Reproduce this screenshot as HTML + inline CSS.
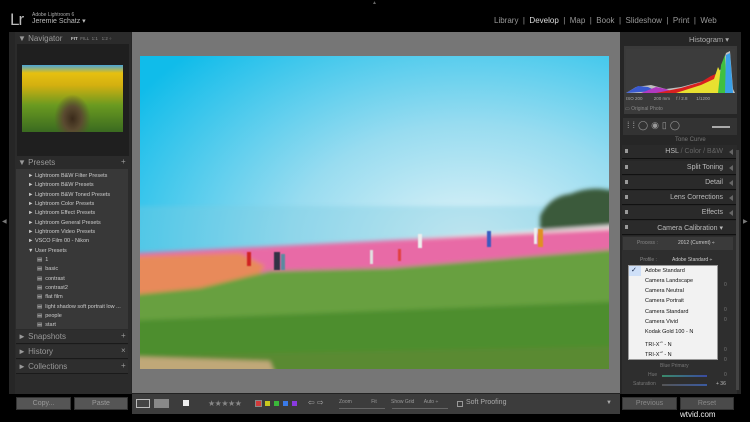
<!DOCTYPE html>
<html><head><meta charset="utf-8"><style>
*{margin:0;padding:0;box-sizing:border-box}
body{width:750px;height:422px;overflow:hidden;background:#000;font-family:"Liberation Sans",sans-serif;position:relative;color:#aaa}
.a{position:absolute}
.t{position:absolute;white-space:nowrap}
.ph{font-size:8px;color:#999}
.li{font-size:5.5px;color:#ccc}
.sec{position:absolute;left:622px;width:115px;height:14px;background:#2a2a2a;border-bottom:1px solid #111}
.sec span{position:absolute;right:14px;top:3px;font-size:7px;color:#bbb}
.sec i{position:absolute;right:4px;top:4px;width:0;height:0;border-top:3px solid transparent;border-bottom:3px solid transparent;border-right:4px solid #666}
.sec b{position:absolute;left:3px;top:4px;width:3px;height:4px;background:#999}
.dd{font-size:5.5px;color:#111;position:absolute;left:645px}
</style></head><body>
<!-- top bar -->
<div class="t" style="left:10px;top:10px;font-size:17px;color:#bbb;letter-spacing:-1px">Lr</div>
<div class="t" style="left:32px;top:12px;font-size:5px;color:#aaa">Adobe Lightroom 6</div>
<div class="t" style="left:32px;top:17px;font-size:7px;color:#bbb">Jeremie Schatz ▾</div>
<div class="t" style="left:494px;top:16px;font-size:8px;color:#999">Library &nbsp;|&nbsp; <span style="color:#ddd">Develop</span> &nbsp;|&nbsp; Map &nbsp;|&nbsp; Book &nbsp;|&nbsp; Slideshow &nbsp;|&nbsp; Print &nbsp;|&nbsp; Web</div>
<div class="t" style="left:372px;top:0;font-size:5px;color:#666">▲</div>

<!-- left panel -->
<div class="a" style="left:9px;top:32px;width:123px;height:362px;background:#262626"></div>
<div class="a" style="left:15px;top:32px;width:116px;height:362px;background:#2b2b2b"></div>
<div class="t ph" style="left:18px;top:34px">▼ Navigator</div>
<div class="t" style="left:71px;top:36px;font-size:4.5px;color:#888"><b style="color:#ccc">FIT</b> &nbsp;FILL &nbsp;1:1 &nbsp; 1:2 ÷</div>
<div class="a" style="left:17px;top:44px;width:112px;height:112px;background:#1f1f1f"></div>
<div class="a" style="left:22px;top:65px;width:101px;height:67px;background:radial-gradient(ellipse 30% 60% at 50% 80%,#3a2a1a 0,#5a4a30 30%,transparent 60%),linear-gradient(#4aa4d8 0,#e6c010 12%,#d4b010 30%,#6a9a20 60%,#3a6a20 100%)"></div>
<div class="t ph" style="left:18px;top:158px">▼ Presets</div>
<div class="t" style="left:121px;top:157px;font-size:8px;color:#999">+</div>
<div class="a" style="left:16px;top:169px;width:112px;height:160px;background:#383838"></div>
<div class="t li" style="left:28px;top:172px;line-height:9.35px">► Lightroom B&amp;W Filter Presets<br>► Lightroom B&amp;W Presets<br>► Lightroom B&amp;W Toned Presets<br>► Lightroom Color Presets<br>► Lightroom Effect Presets<br>► Lightroom General Presets<br>► Lightroom Video Presets<br>► VSCO Film 00 - Nikon<br>▼ User Presets</div>
<div class="t li" style="left:37px;top:256px;line-height:9.35px">▤ &nbsp;1<br>▤ &nbsp;basic<br>▤ &nbsp;contrast<br>▤ &nbsp;contrast2<br>▤ &nbsp;flat film<br>▤ &nbsp;light shadow soft portrait low ...<br>▤ &nbsp;people<br>▤ &nbsp;start</div>
<div class="a" style="left:16px;top:330px;width:112px;height:14px;background:#2e2e2e;border-bottom:1px solid #1a1a1a"></div>
<div class="t ph" style="left:18px;top:332px">► Snapshots</div><div class="t ph" style="left:121px;top:331px">+</div>
<div class="a" style="left:16px;top:345px;width:112px;height:14px;background:#2e2e2e;border-bottom:1px solid #1a1a1a"></div>
<div class="t ph" style="left:18px;top:347px">► History</div><div class="t ph" style="left:121px;top:346px">×</div>
<div class="a" style="left:16px;top:360px;width:112px;height:14px;background:#2e2e2e;border-bottom:1px solid #1a1a1a"></div>
<div class="t ph" style="left:18px;top:362px">► Collections</div><div class="t ph" style="left:121px;top:361px">+</div>
<div class="t" style="left:2px;top:218px;font-size:6px;color:#777">◀</div>
<div class="a" style="left:16px;top:397px;width:55px;height:13px;background:#555;border:1px solid #333;font-size:7px;color:#999;text-align:center;line-height:11px">Copy...</div>
<div class="a" style="left:74px;top:397px;width:54px;height:13px;background:#555;border:1px solid #333;font-size:7px;color:#999;text-align:center;line-height:11px">Paste</div>

<!-- center -->
<div class="a" style="left:132px;top:32px;width:488px;height:361px;background:#767676"></div>
<svg class="a" style="left:140px;top:56px" width="469" height="313" viewBox="0 0 469 313">
<defs>
<radialGradient id="sky" cx="0.7" cy="0.6" r="0.85"><stop offset="0" stop-color="#e4f4f8"/><stop offset="0.45" stop-color="#98dcf0"/><stop offset="1" stop-color="#10bcea"/></radialGradient>
<filter id="bl" x="-10%" y="-10%" width="120%" height="120%"><feGaussianBlur stdDeviation="2"/></filter>
<filter id="bl2"><feGaussianBlur stdDeviation="0.6"/></filter>
<clipPath id="c"><rect width="469" height="313"/></clipPath>
</defs>
<g clip-path="url(#c)">
<rect width="469" height="313" fill="url(#sky)"/>
<rect x="-20" y="150" width="510" height="50" fill="#7ccbe0" opacity="0.35" filter="url(#bl)"/>
<g filter="url(#bl)">
<path d="M400 160 Q410 140 430 138 Q450 130 469 134 L490 134 L490 180 L400 185Z" fill="#3a5a3a"/>
<path d="M240 185 L490 168 L490 190 L240 200Z" fill="#f0f0ee"/>
<path d="M-20 198 L490 172 L490 205 L-20 230Z" fill="#e86aa6"/>
<path d="M-20 201 L100 197 L125 210 L110 230 L40 240 L-20 245Z" fill="#e88a5a"/>
<path d="M-20 240 L60 232 L130 215 L250 212 L490 192 L490 330 L-20 330Z" fill="#68a040"/>
<path d="M-20 265 L490 245 L490 330 L-20 330Z" fill="#4e8e2e"/>
<path d="M-20 300 L490 290 L490 330 L-20 330Z" fill="#5a8a30"/>
<path d="M-20 300 L130 305 L140 330 L-20 330Z" fill="#c0a878"/>
</g>
<g filter="url(#bl2)">
<rect x="107" y="196" width="4" height="14" fill="#d02020"/>
<rect x="134" y="196" width="6" height="18" fill="#334"/><rect x="141" y="198" width="4" height="16" fill="#5a8aa0"/>
<rect x="230" y="194" width="3" height="14" fill="#e0e0e0"/><rect x="278" y="178" width="4" height="14" fill="#eee"/>
<rect x="347" y="175" width="4" height="16" fill="#3a5ac0"/><rect x="398" y="173" width="5" height="18" fill="#e09020"/><rect x="394" y="172" width="3" height="16" fill="#eee"/>
<rect x="258" y="193" width="3" height="12" fill="#e04040"/>
</g>
</g>
</svg>

<!-- toolbar -->
<div class="a" style="left:132px;top:393px;width:488px;height:21px;background:#3c3c3c;border-top:1px solid #222"></div>
<div class="a" style="left:136px;top:399px;width:14px;height:9px;border:1px solid #bbb;background:#444"></div>
<div class="a" style="left:154px;top:399px;width:15px;height:9px;background:#888"></div>
<div class="a" style="left:183px;top:400px;width:6px;height:6px;background:#eee"></div>
<div class="t" style="left:208px;top:399px;font-size:8px;color:#888;letter-spacing:-0.5px">★★★★★</div>
<div class="a" style="left:255px;top:400px;width:7px;height:7px;background:#d23a3a;border:1px solid #888"></div>
<div class="a" style="left:265px;top:401px;width:5px;height:5px;background:#c8c81e"></div>
<div class="a" style="left:274px;top:401px;width:5px;height:5px;background:#3ab83a"></div>
<div class="a" style="left:283px;top:401px;width:5px;height:5px;background:#3a7ae8"></div>
<div class="a" style="left:292px;top:401px;width:5px;height:5px;background:#8a3ae0"></div>
<div class="t" style="left:308px;top:398px;font-size:8px;color:#aaa">⇦ ⇨</div>
<div class="t" style="left:339px;top:399px;font-size:5px;color:#999">Zoom &nbsp; &nbsp; &nbsp; &nbsp; &nbsp; &nbsp; &nbsp;Fit</div>
<div class="a" style="left:339px;top:408px;width:46px;height:1px;background:#666"></div>
<div class="t" style="left:391px;top:399px;font-size:5px;color:#999">Show Grid &nbsp; &nbsp; &nbsp; Auto ÷</div>
<div class="a" style="left:392px;top:408px;width:56px;height:1px;background:#666"></div>
<div class="a" style="left:457px;top:401px;width:6px;height:6px;border:1px solid #999"></div>
<div class="t" style="left:466px;top:399px;font-size:7px;color:#aaa">Soft Proofing</div>
<div class="t" style="left:606px;top:400px;font-size:6px;color:#aaa">▼</div>

<!-- right panel -->
<div class="a" style="left:620px;top:32px;width:121px;height:362px;background:#262626"></div>
<div class="t" style="left:689px;top:35px;font-size:7.5px;color:#aaa">Histogram ▾</div>
<div class="a" style="left:624px;top:46px;width:113px;height:68px;background:#3a3a3a"></div>
<svg class="a" style="left:626px;top:49px" width="109" height="44" viewBox="0 0 109 44">
<rect width="109" height="44" fill="#3c3c3c"/>
<path d="M0 44 L10 38 L25 36 L40 40 L55 38 L70 34 L85 30 L95 20 L100 4 L104 2 L107 40 L109 44Z" fill="#e0e0e0" opacity="0.8"/>
<path d="M0 44 L12 37 L22 38 L30 42Z" fill="#3a5ad0"/>
<path d="M15 44 L30 38 L40 40 L50 44Z" fill="#b03ac0"/>
<path d="M30 44 L55 39 L75 33 L85 27 L92 24 L95 44Z" fill="#d82020"/>
<path d="M50 44 L75 36 L88 30 L92 18 L96 26 L97 44Z" fill="#e8e030"/>
<path d="M92 44 L95 16 L99 6 L101 44Z" fill="#40c040"/>
<path d="M99 44 L100 6 L104 4 L107 44Z" fill="#3aa0e8"/>
</svg>
<div class="t" style="left:626px;top:96px;font-size:4.5px;color:#aaa">ISO 200 &nbsp; &nbsp; &nbsp; &nbsp; 200 mm &nbsp; &nbsp; f / 2.8 &nbsp; &nbsp; &nbsp; 1/1200</div>
<div class="t" style="left:625px;top:106px;font-size:5px;color:#888">▭ Original Photo</div>
<div class="a" style="left:623px;top:118px;width:114px;height:17px;background:#333"></div>
<div class="t" style="left:627px;top:120px;font-size:9px;color:#999;letter-spacing:3px">⁞⁞◯◉▯◯</div>
<div class="a" style="left:712px;top:126px;width:18px;height:2px;background:#aaa"></div>
<div class="t" style="left:675px;top:137px;font-size:6px;color:#777">Tone Curve</div>
<div class="sec" style="top:145px"><b></b><span>HSL <span style="position:static;color:#666">/ Color / B&amp;W</span></span><i></i></div>
<div class="sec" style="top:161px"><b></b><span>Split Toning</span><i></i></div>
<div class="sec" style="top:176px"><b></b><span>Detail</span><i></i></div>
<div class="sec" style="top:191px"><b></b><span>Lens Corrections</span><i></i></div>
<div class="sec" style="top:206px"><b></b><span>Effects</span><i></i></div>
<div class="sec" style="top:221px"><b></b><span>Camera Calibration ▾</span></div>
<div class="a" style="left:622px;top:236px;width:115px;height:158px;background:#2e2e2e"></div>
<div class="a" style="left:623px;top:237px;width:110px;height:13px;background:#3a3a3a"></div>
<div class="t" style="left:637px;top:240px;font-size:5px;color:#888">Process :</div>
<div class="t" style="left:678px;top:240px;font-size:5px;color:#ccc">2012 (Current) ÷</div>
<div class="t" style="left:640px;top:257px;font-size:5px;color:#888">Profile :</div>
<div class="t" style="left:672px;top:257px;font-size:5px;color:#ccc">Adobe Standard ÷</div>
<div class="a" style="left:628px;top:265px;width:90px;height:95px;background:#f2f2f2;border:1px solid #999"></div>
<div class="a" style="left:629px;top:266px;width:12px;height:10px;background:#cfe0f8"></div>
<div class="t" style="left:631px;top:266px;font-size:7px;color:#124">✓</div>
<div class="dd" style="top:268px">Adobe Standard</div>
<div class="dd" style="top:278px">Camera Landscape</div>
<div class="dd" style="top:288px">Camera Neutral</div>
<div class="dd" style="top:298px">Camera Portrait</div>
<div class="dd" style="top:309px">Camera Standard</div>
<div class="dd" style="top:319px">Camera Vivid</div>
<div class="dd" style="top:329px">Kodak Gold 100 - N</div>
<div class="dd" style="top:340px">TRI-X<sup style="font-size:3px">+1</sup> - N</div>
<div class="dd" style="top:350px">TRI-X<sup style="font-size:3px">+2</sup> - N</div>
<div class="t" style="left:724px;top:283px;font-size:5px;color:#777;line-height:5px">0<br><br><br><br><br>0<br><br>0<br><br><br><br><br><br>0<br><br>0<br><br><br>0</div>
<div class="t" style="left:660px;top:363px;font-size:5px;color:#777">Blue Primary</div>
<div class="t" style="left:648px;top:372px;font-size:5px;color:#777">Hue</div>
<div class="a" style="left:662px;top:375px;width:45px;height:2px;background:linear-gradient(90deg,#3a8a6a,#3a4aa0)"></div>
<div class="t" style="left:633px;top:381px;font-size:5px;color:#777">Saturation</div>
<div class="a" style="left:662px;top:384px;width:45px;height:2px;background:linear-gradient(90deg,#555,#3a5aa0)"></div>
<div class="t" style="left:716px;top:381px;font-size:5px;color:#bbb">+ 36</div>
<div class="a" style="left:622px;top:397px;width:55px;height:13px;background:#4a4a4a;border:1px solid #333;font-size:7px;color:#888;text-align:center;line-height:11px">Previous</div>
<div class="a" style="left:680px;top:397px;width:54px;height:13px;background:#4a4a4a;border:1px solid #333;font-size:7px;color:#888;text-align:center;line-height:11px">Reset</div>
<div class="t" style="left:680px;top:410px;font-size:8px;color:#eee">wtvid.com</div>
<div class="a" style="left:736px;top:150px;width:3px;height:240px;background:#444"></div>
<div class="t" style="left:743px;top:218px;font-size:6px;color:#777">▶</div>
</body></html>
